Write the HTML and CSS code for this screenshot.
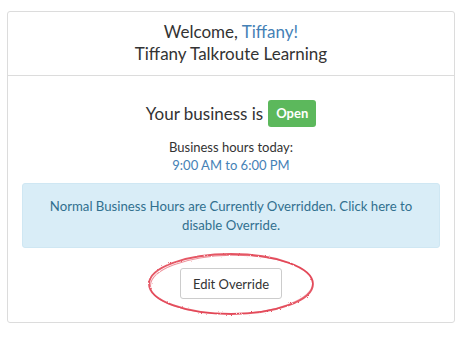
FILE: index.html
```html
<!DOCTYPE html>
<html>
<head>
<meta charset="utf-8">
<link rel="stylesheet" href="styles.css">
</head>
<body>
<div class="panel">
  <div class="panel-heading">
    <div>Welcome, <span class="link">Tiffany!</span></div>
    <div>Tiffany Talkroute Learning</div>
  </div>
  <div class="panel-body">
    <div class="status">Your business is <span class="badge">Open</span></div>
    <div class="hours">
      <div>Business hours today:</div>
      <div class="link">9:00 AM to 6:00 PM</div>
    </div>
    <div class="alert">Normal Business Hours are Currently Overridden. Click here to disable Override.</div>
    <div class="btn-wrap">
      <button class="btn">Edit Override</button>
      <svg class="circle" width="172" height="68" viewBox="0 0 172 68">
        <defs>
          <filter id="rough" x="-10%" y="-10%" width="120%" height="120%">
            <feTurbulence type="fractalNoise" baseFrequency="0.9" numOctaves="2" seed="3"/>
            <feDisplacementMap in="SourceGraphic" scale="2.2"/>
          </filter>
        </defs>
        <g filter="url(#rough)" fill="none" stroke="#e0394a">
          <ellipse cx="86" cy="34" rx="82" ry="30" stroke-width="1.8" opacity="0.85"/>
          <ellipse cx="86.5" cy="34.5" rx="81" ry="29.3" stroke-width="1" opacity="0.55" transform="rotate(-1 86 34)"/>
        </g>
      </svg>
    </div>
  </div>
</div>
</body>
</html>
```
FILE: styles.css
```css
html, body {
  margin: 0;
  padding: 0;
  background: #fff;
}
body {
  font-family: Lato, "Open Sans", "Liberation Sans", sans-serif;
  color: #333;
  padding: 11px 0 0 7px;
}
.panel {
  width: 446px;
  border: 1px solid #dcdcdc;
  border-radius: 3px;
  background: #fff;
}
.panel-heading {
  height: 64px;
  border-bottom: 1px solid #dcdcdc;
  text-align: center;
  font-size: 17px;
  line-height: 22px;
  padding-top: 9px;
  box-sizing: border-box;
}
.link {
  color: #4581b6;
}
.panel-body {
  display: flex;
  flex-direction: column;
  align-items: center;
  padding: 24px 14px 23px;
}
.status {
  font-size: 17px;
  line-height: 27px;
  height: 27px;
  display: flex;
  align-items: center;
  gap: 5px;
}
.badge {
  display: inline-block;
  background: #5cb85c;
  color: #fff;
  font-weight: 700;
  font-size: 13px;
  width: 48px;
  height: 27px;
  line-height: 27px;
  text-align: center;
  border-radius: 3px;
}
.hours {
  margin-top: 11px;
  font-size: 13px;
  line-height: 18px;
  text-align: center;
}
.alert {
  margin-top: 9px;
  align-self: stretch;
  box-sizing: border-box;
  height: 65px;
  background: #d9edf7;
  border: 1px solid #cfe7f3;
  border-radius: 3px;
  color: #31708f;
  font-size: 13.2px;
  line-height: 19px;
  text-align: center;
  padding: 13px 14px 0;
}
.btn-wrap {
  position: relative;
  margin-top: 20px;
}
.btn {
  display: block;
  width: 102px;
  height: 31px;
  background: #fff;
  border: 1px solid #ccc;
  border-radius: 3px;
  font-family: Lato, "Open Sans", sans-serif;
  font-size: 13px;
  color: #333;
  padding: 0;
}
.circle {
  position: absolute;
  left: 50%;
  top: 50%;
  transform: translate(-50%, -50%);
  pointer-events: none;
}
```
